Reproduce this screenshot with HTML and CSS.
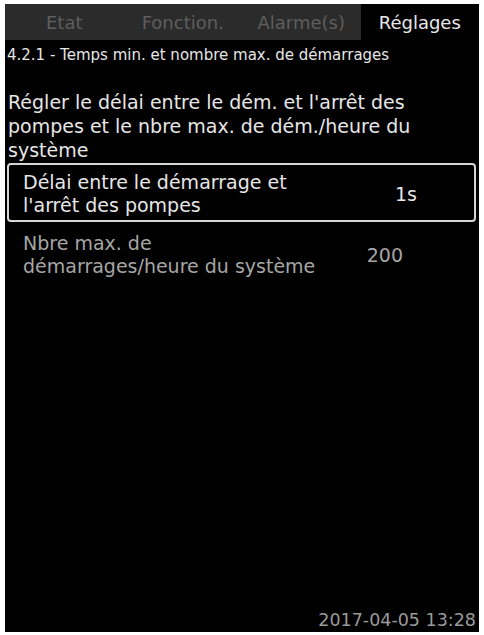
FILE: index.html
```html
<!DOCTYPE html>
<html lang="fr">
<head>
<meta charset="utf-8">
<title>Réglages</title>
<link rel="stylesheet" href="styles.css">
</head>
<body>
<div class="screen">
  <div class="tabs">
    <div class="tab">Etat</div>
    <div class="tab">Fonction.</div>
    <div class="tab">Alarme(s)</div>
    <div class="tab active">Réglages</div>
  </div>
  <div class="title">4.2.1 - Temps min. et nombre max. de démarrages</div>
  <div class="desc">Régler le délai entre le dém. et l'arrêt des<br>pompes et le nbre max. de dém./heure du<br>système</div>
  <div class="list">
    <div class="row selected">
      <div class="label">Délai entre le démarrage et<br>l'arrêt des pompes</div>
      <div class="value value-short">1s</div>
    </div>
    <div class="row dim">
      <div class="label">Nbre max. de<br>démarrages/heure du système</div>
      <div class="value value-num">200</div>
    </div>
  </div>
  <div class="footer">2017-04-05 13:28</div>
</div>
</body>
</html>
```
FILE: styles.css
```css
html, body {
  margin: 0;
  padding: 0;
  background: #ffffff;
}

.screen {
  margin: 4px 5px 3px 5px;
  width: 474px;
  height: 628px;
  background: #000000;
  display: flex;
  flex-direction: column;
  font-family: "DejaVu Sans", "Liberation Sans", sans-serif;
  color: #e6e6e6;
}

.tabs {
  display: grid;
  grid-template-columns: repeat(4, 1fr);
  height: 36px;
  background: #2b2b2b;
}

.tab {
  display: flex;
  align-items: center;
  justify-content: center;
  font-size: 18px;
  color: #5e5e5e;
}

.tab.active {
  background: #000000;
  color: #e8e8e8;
}

.title {
  padding: 6px 0 0 2px;
  font-size: 15px;
  line-height: 18px;
}

.desc {
  margin-top: 26px;
  padding-left: 3px;
  font-size: 19px;
  line-height: 24px;
}

.list {
  margin: 1px 3px 0 2px;
}

.row {
  display: grid;
  grid-template-columns: 1fr auto;
  align-items: center;
  border: 2px solid transparent;
  border-radius: 4px;
  padding: 6px 0 3px 14px;
  font-size: 19px;
  line-height: 23px;
}

.row.selected {
  border-color: #d6d6d6;
}

.row.dim {
  margin-top: 2px;
  color: #a6a6a6;
}

.value-short {
  padding-right: 57px;
}

.value-num {
  padding-right: 71px;
}

.footer {
  margin-top: auto;
  padding: 0 3px 1px 0;
  text-align: right;
  font-size: 17.5px;
  line-height: 22px;
  color: #9a9a9a;
}
```
